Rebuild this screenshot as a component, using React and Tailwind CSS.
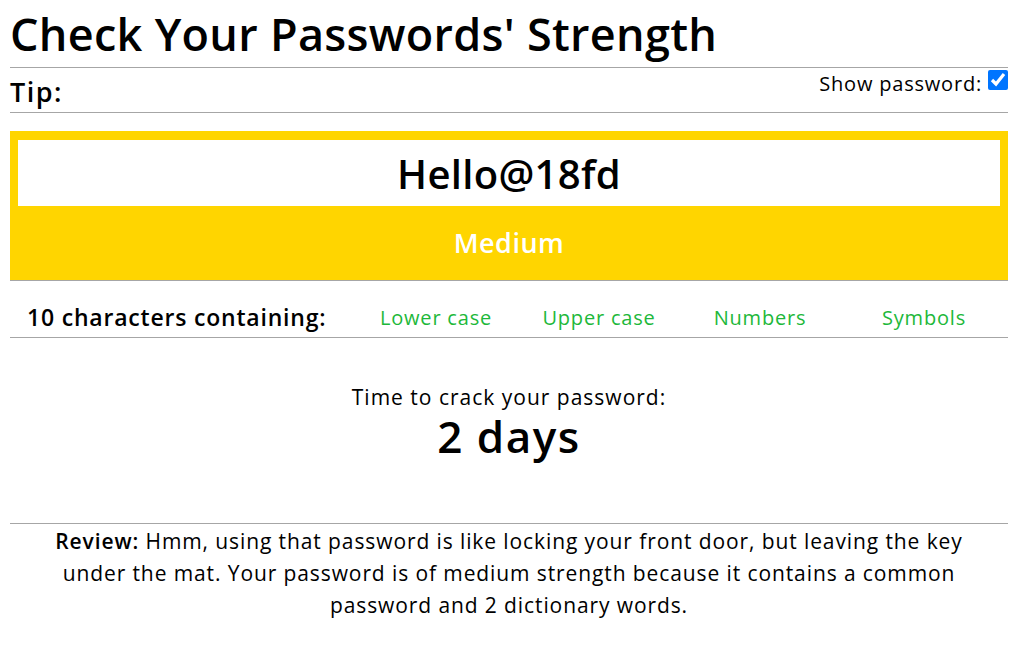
import { useState } from "react";

const strengthChecks = ["Lower case", "Upper case", "Numbers", "Symbols"];

export default function App() {
  const [show, setShow] = useState(true);
  const password = "Hello@18fd";

  return (
    <div className="pl-[10px] pr-[23px] font-['Open_Sans',sans-serif] text-black">
      <h1 className="text-[45px] tracking-[0.3px] font-semibold leading-[67px] h-[67px]">
        Check Your Passwords' Strength
      </h1>

      {/* Tip + toggle */}
      <div className="flex justify-between items-start h-[46px] border-y border-[#a6a6a6]">
        <h3 className="text-[27px] tracking-[1.5px] font-semibold leading-[44px] pt-[2px]">Tip:</h3>
        <label className="flex items-start gap-[6px] pt-[2px] text-[20px] tracking-[0.8px]">
          <span className="leading-[26px] mt-[1px]">Show password:</span>
          <input
            type="checkbox"
            checked={show}
            onChange={() => setShow(!show)}
            className="w-5 h-5 accent-[#0075ff]"
          />
        </label>
      </div>

      {/* Password box */}
      <div className="mt-[18px] bg-[#ffd500] pt-[9px] px-[8px] border-b border-[#a6a6a6]">
        <input
          type={show ? "text" : "password"}
          value={password}
          readOnly
          className="w-full h-[66px] bg-white text-center text-[40px] tracking-[0.3px] font-semibold outline-none"
        />
        <div className="h-[74px] flex items-center justify-center text-white text-[27px] tracking-[0.5px] font-semibold">
          Medium
        </div>
      </div>

      {/* Character classes */}
      <div className="grid grid-cols-[344px_164px_162px_160px_168px] items-center h-[57px] pt-[17px] border-b border-[#a6a6a6]">
        <div className="pl-[17px] text-[23px] tracking-[0.8px] font-semibold">10 characters containing:</div>
        {strengthChecks.map((c) => (
          <div key={c} className="text-center text-[20px] tracking-[0.8px] text-[#1db83a]">
            {c}
          </div>
        ))}
      </div>

      {/* Crack time */}
      <div className="h-[185px] flex flex-col items-center pt-[45px]">
        <p className="text-[21px] tracking-[1px] leading-[28px]">Time to crack your password:</p>
        <p className="text-[44px] tracking-[1.5px] font-semibold leading-[50px]">2 days</p>
      </div>

      {/* Review */}
      <div className="border-t border-[#a6a6a6] pt-[1px] text-center text-[21px] tracking-[0.9px] leading-[32px]">
        <b className="font-semibold">Review:</b> Hmm, using that password is like locking your front door, but leaving the key
        <br />
        under the mat. Your password is of medium strength because it contains a common
        <br />
        password and 2 dictionary words.
      </div>
    </div>
  );
}
